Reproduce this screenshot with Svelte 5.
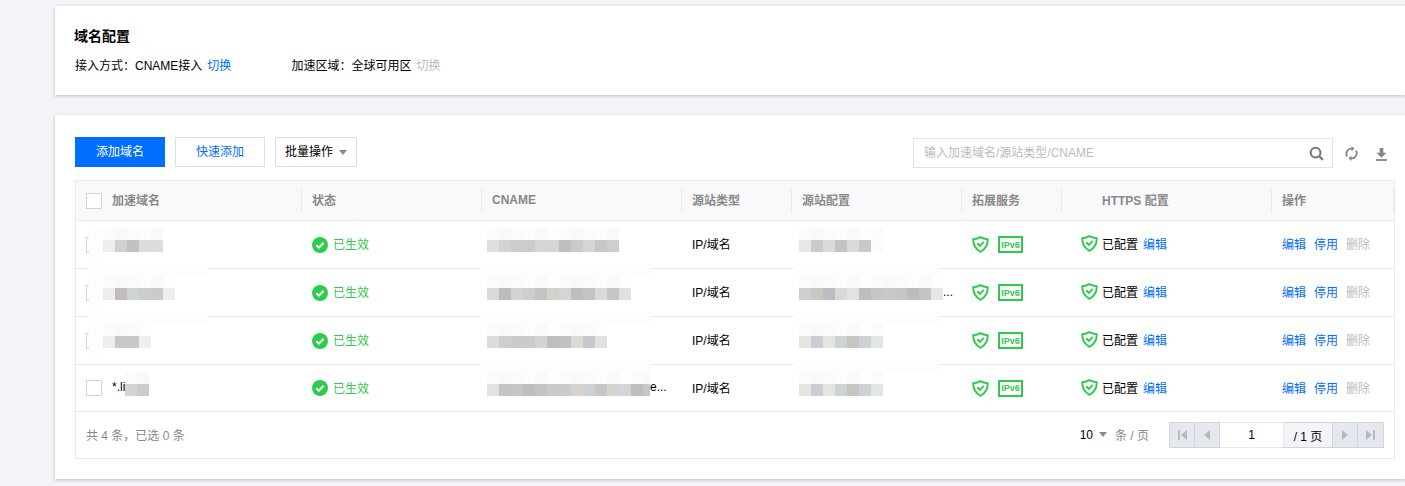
<script lang="ts">
  const faint = ["#fbfbfb", "#f8f8f8", "#fbfbfb", "#fdfdfd", "#f9f9f9", "#fdfdfd"];

  const rows = [
    {
      name: ["#eeeeec", "#d0d0d0", "#c4c2c0", "#dcdcdc", "#dcdddf"],
      cname: ["#dfdfdd", "#d3d3d3", "#cccccc", "#cbcbc9", "#d6d5d1", "#d2d6da", "#c2bebb", "#c9cbca", "#d3d5da", "#c9c7c8", "#cdcfcd"],
      origin: ["#e6e7e9", "#cdcbc9", "#d9dadc", "#c4c4c2", "#dadada", "#c9c9c9", "#fafbfd"],
    },
    {
      name: ["#ecedec", "#c2bcbc", "#d0d3d6", "#cdcdcd", "#cccbcb", "#eeeeee"],
      cname: ["#dad9d7", "#bcbcbc", "#d4d3d1", "#ccced3", "#c4c4c4", "#d4d1cc", "#d3d5d9", "#bebebe", "#c4c2c2", "#d8dadc", "#c6c6c6", "#e0e0e0"],
      origin: ["#cfcfcf", "#c9c7c4", "#bcbdc0", "#d8d8d8", "#e2e2e2", "#bfbdba", "#c6c6c3", "#c7c8c8", "#c4c6c8", "#bcbcbc", "#c4c4c6", "#e6e6e8"],
      originMore: true,
    },
    {
      name: ["#eeeeec", "#c8c8c8", "#cac8c6", "#eff0ee"],
      cname: ["#dfdbd8", "#cecece", "#c6cbce", "#cdcbc7", "#d3d3d0", "#bebebe", "#c0c2c0", "#dadad6", "#c6c8cc", "#e0e2e0"],
      origin: ["#e8e5e0", "#cccdd2", "#e4e4e0", "#d0d3d6", "#c8c4c0", "#ccd2d6", "#e4e4e4"],
    },
    {
      prefix: "*.li",
      name: ["#d4d4d4", "#c8ccd0"],
      cname: ["#e2e2e0", "#c4c4c4", "#c8c6c2", "#bcbfc2", "#c4c4c4", "#cbcaca", "#cccbc9", "#d5d3d0", "#ccd2d4", "#c6c6c6", "#d6d2ce", "#d3d5d8", "#bebebc", "#c8c8c8"],
      cnameMore: true,
      origin: ["#e8e5e0", "#cccdd2", "#e4e4e0", "#d0d3d6", "#c8c4c0", "#ccd2d6", "#e4e4e4"],
    },
  ];
</script>

{#snippet mosaic(cells: string[])}
  <span class="mosaic">
    <span class="mosaic-row">
      {#each cells as _, i}
        <i style="background:{faint[i % faint.length]}"></i>
      {/each}
    </span>
    <span class="mosaic-row">
      {#each cells as c}
        <i style="background:{c}"></i>
      {/each}
    </span>
  </span>
{/snippet}

{#snippet shield()}
  <svg class="shield" width="17" height="17" viewBox="0 0 17 17" fill="none" stroke="#2fcb4f">
    <path d="M8.5 1.2C6.4 2.6 4 3.1 1.2 3.2c0 5.6 2.2 9.800 7.300 12.600 5.100-2.800 7.300-7 7.300-12.600C13 3.100 10.600 2.600 8.500 1.200z" stroke-width="2" stroke-linejoin="round" />
    <path d="M5.200 7.300l2.600 2.600 4-4" stroke-width="2" />
  </svg>
{/snippet}

<div class="page">
  <section class="card config">
    <h2>域名配置</h2>
    <div class="meta">
      <div class="meta-item">接入方式：<span class="strong">CNAME接入</span><a href="#top" class="link">切换</a></div>
      <div class="meta-item">加速区域：<span class="strong">全球可用区</span><span class="off">切换</span></div>
    </div>
  </section>

  <section class="card list">
    <div class="toolbar">
      <button class="btn primary"><span>添加域名</span></button>
      <button class="btn ghost"><span>快速添加</span></button>
      <button class="btn batch"><span>批量操作</span><span class="caret"></span></button>
      <div class="tools">
        <div class="search">
          <span class="placeholder">输入加速域名/源站类型/CNAME</span>
          <svg width="15" height="15" viewBox="0 0 16 16" fill="none" stroke="#777">
            <circle cx="7" cy="7" r="5.200" stroke-width="2.200" />
            <path d="M11 11l3.800 3.800" stroke-width="2.400" />
          </svg>
        </div>
        <svg class="tool" width="13" height="15" viewBox="0 0 14 16" fill="none" stroke="#888" stroke-width="2">
          <path d="M2.200 11.200A5.600 5.600 0 0 1 7.500 2.800" />
          <path d="M11.800 4.800A5.600 5.600 0 0 1 6.500 13.200" />
          <path d="M7 0l3.400 2.800L7 5.600z" fill="#888" stroke="none" />
          <path d="M7 10.400l-3.400 2.800L7 16z" fill="#888" stroke="none" />
        </svg>
        <svg class="tool last" width="11" height="13" viewBox="0 0 12 14" fill="#888">
          <path d="M4 0h4v5h3.500L6 10.500.5 5H4z" />
          <rect x="0" y="12" width="12" height="2" />
        </svg>
      </div>
    </div>

    <div class="table">
      <div class="row head">
        <div class="cell first"><div class="label"><span class="check"></span><span class="title">加速域名</span></div></div>
        <div class="cell"><div class="label"><span class="title">状态</span></div></div>
        <div class="cell"><div class="label"><span class="title">CNAME</span></div></div>
        <div class="cell"><div class="label"><span class="title">源站类型</span></div></div>
        <div class="cell"><div class="label"><span class="title">源站配置</span></div></div>
        <div class="cell"><div class="label"><span class="title">拓展服务</span></div></div>
        <div class="cell"><div class="label https"><span class="title">HTTPS 配置</span></div></div>
        <div class="cell"><div class="label"><span class="title">操作</span></div></div>
      </div>

      {#each rows as r, i}
        <div class="row body" class:short={i === 3}>
          <div class="cell first">
            <span class="check"></span>
            {#if r.prefix}<span class="domain">{r.prefix}</span>{/if}
            {@render mosaic(r.name)}
            {#if i < 3}
              <span class="patch side"></span>
              {#if i < 2}<span class="patch gap name"></span>{/if}
            {/if}
          </div>
          <div class="cell status">
            <svg width="16" height="16" viewBox="0 0 16 16">
              <circle cx="8" cy="8" r="8" fill="#2fcb4f" />
              <path d="M4.300 8.200l2.600 2.500 4.700-4.900" fill="none" stroke="#fff" stroke-width="2" />
            </svg>
            已生效
          </div>
          <div class="cell cname">
            {@render mosaic(r.cname)}
            {#if r.cnameMore}<span class="more">e...</span>{/if}
            {#if i < 3}<span class="patch gap cname-gap"></span>{/if}
          </div>
          <div class="cell">IP/域名</div>
          <div class="cell origin">
            {@render mosaic(r.origin)}
            {#if r.originMore}<span class="more">...</span>{/if}
            {#if i < 3}<span class="patch gap origin-gap"></span>{/if}
          </div>
          <div class="cell service">
            {@render shield()}
            <span class="ipv6">IPv6</span>
          </div>
          <div class="cell https-cell">
            {@render shield()}
            <span class="done">已配置</span>
            <a href="#top" class="link">编辑</a>
          </div>
          <div class="cell ops">
            <a href="#top" class="link">编辑</a>
            <a href="#top" class="link">停用</a>
            <span class="off">删除</span>
          </div>
        </div>
      {/each}

      <div class="foot">
        <span class="count">共 4 条，已选 0 条</span>
        <div class="page-size">
          <span class="size">10</span><span class="caret"></span><span class="unit">条 / 页</span>
        </div>
        <div class="pager">
          <span class="pg">
            <svg width="9" height="10" viewBox="0 0 9 10" fill="#b4b9c2"><rect width="2" height="10" /><path d="M9 0v10L3 5z" /></svg>
          </span>
          <span class="pg">
            <svg width="6" height="10" viewBox="0 0 6 10" fill="#b4b9c2"><path d="M6 0v10L0 5z" /></svg>
          </span>
          <span class="pg-input">1</span>
          <span class="pg-total">/ 1 页</span>
          <span class="pg">
            <svg width="6" height="10" viewBox="0 0 6 10" fill="#b4b9c2"><path d="M0 0v10l6-5z" /></svg>
          </span>
          <span class="pg">
            <svg width="9" height="10" viewBox="0 0 9 10" fill="#b4b9c2"><path d="M0 0v10l6-5z" /><rect x="7" width="2" height="10" /></svg>
          </span>
        </div>
      </div>
    </div>
  </section>
</div>

<style>
  :global(body) {
    background: #f2f4f8;
    font-family: "Liberation Sans", "Noto Sans CJK SC", sans-serif;
    font-size: 12px;
    color: #000;
  }

  .page {
    height: 486px;
    overflow: hidden;
    padding: 6px 0 0 55px;
    box-sizing: border-box;
  }

  .card {
    background: #fff;
    box-shadow: 0 1px 3px rgba(54, 58, 80, 0.3);
    box-sizing: border-box;
  }

  .config {
    height: 89px;
    padding: 21px 20px 0;
  }

  h2 {
    margin: 0 0 0 -1px;
    font-size: 14px;
    line-height: 18px;
    font-weight: 700;
    color: #000;
  }

  .meta {
    display: flex;
    gap: 60px;
    margin-top: 12px;
    line-height: 18px;
  }

  .meta-item {
    color: #000;
    display: flex;
  }

  .strong {
    margin-right: 5px;
  }

  a {
    text-decoration: none;
  }

  .link {
    color: #006eff;
  }

  .off {
    color: #bbb;
  }

  .list {
    margin-top: 20px;
    height: 364px;
    padding: 22px 10px 0 20px;
  }

  .toolbar {
    display: flex;
    gap: 10px;
    height: 30px;
    margin-bottom: 13px;
  }

  .btn {
    height: 30px;
    box-sizing: border-box;
    border: 1px solid #dcdfe6;
    background: #fff;
    font: inherit;
    padding: 0 0 3px;
    display: flex;
    align-items: center;
    justify-content: center;
  }

  .primary {
    width: 90px;
    background: #006eff;
    border-color: #006eff;
    color: #fff;
  }

  .ghost {
    width: 90px;
    color: #006eff;
  }

  .batch {
    width: 82px;
    color: #000;
  }

  .caret {
    display: inline-block;
    width: 0;
    height: 0;
    border-left: 4px solid transparent;
    border-right: 4px solid transparent;
    border-top: 5px solid #888;
    margin-left: 6px;
  }

  .batch .caret {
    margin-top: 3px;
  }

  .tools {
    margin-left: auto;
    display: flex;
    align-items: center;
    height: 30px;
    margin-top: 1px;
    margin-right: 8px;
  }

  .search {
    width: 420px;
    height: 30px;
    box-sizing: border-box;
    border: 1px solid #dfe3ea;
    display: flex;
    align-items: center;
    justify-content: space-between;
    padding: 0 8px 0 10px;
  }

  .placeholder {
    color: #bbb;
    margin-bottom: 3px;
  }

  .tool {
    margin-left: 12px;
  }

  .tool.last {
    margin-left: 18px;
    margin-top: 2px;
  }

  .table {
    width: 1320px;
    height: 279px;
    box-sizing: border-box;
    border: 1px solid #e7eaef;
  }

  .row {
    display: grid;
    grid-template-columns: 226px 180px 200px 110px 170px 100px 210px 122px;
    border-bottom: 1px solid #e7eaef;
    box-sizing: border-box;
  }

  .head {
    height: 40px;
    background: #f9f9fb;
    color: #888;
    font-weight: 700;
  }

  .head .cell {
    padding: 0;
  }

  .label {
    width: 100%;
    height: 23px;
    box-sizing: border-box;
    padding-left: 10px;
    border-right: 1px solid #e7eaef;
    display: flex;
    align-items: center;
  }

  .title {
    margin-bottom: 2px;
  }

  .head .check {
    margin-right: 10px;
  }

  .https {
    padding-left: 40px;
  }

  .body {
    height: 48px;
  }

  .body.short {
    height: 47px;
  }

  .cell {
    display: flex;
    align-items: center;
    padding-left: 10px;
    position: relative;
    min-width: 0;
  }

  /* CJK text sits a pixel low, icons get it back with a top margin */
  .body .cell {
    padding-bottom: 2px;
  }

  .body svg,
  .body .check,
  .body .ipv6 {
    margin-top: 2px;
  }

  .check {
    width: 16px;
    height: 16px;
    box-sizing: border-box;
    border: 1px solid #cfd5de;
    background: #fff;
    flex: none;
  }

  .body .first .check {
    margin-right: 10px;
  }

  .domain {
    color: #000;
  }

  .mosaic {
    display: inline-flex;
    flex-direction: column;
    flex: none;
    margin-bottom: 7px;
    position: relative;
  }

  .first .mosaic {
    margin-left: -9px;
  }

  .first .domain + .mosaic {
    margin-left: 0;
  }

  .cname .mosaic {
    margin-left: -5px;
    max-width: 163px;
    overflow: hidden;
  }

  .origin .mosaic {
    margin-left: -3px;
  }

  .mosaic-row {
    display: flex;
  }

  .mosaic-row i {
    display: block;
    flex: none;
    width: 12px;
    height: 12px;
  }

  /* white smudges left over from the redaction */
  .patch {
    position: absolute;
    background: #fdfdfd;
  }

  .patch.side {
    left: 13px;
    top: 9px;
    width: 14px;
    height: 33px;
  }

  .patch.gap {
    top: 43px;
    height: 12px;
    z-index: 1;
  }

  .patch.name {
    left: 13px;
    width: 118px;
  }

  .patch.cname-gap {
    left: -2px;
    width: 170px;
  }

  .patch.origin-gap {
    left: 2px;
    width: 144px;
  }

  .more {
    color: #000;
    flex: none;
  }

  .status {
    color: #2fcb4f;
    gap: 5px;
  }

  .service .shield {
    margin-right: 9px;
  }

  .ipv6 {
    width: 25px;
    height: 17px;
    box-sizing: border-box;
    border: 2px solid #2fcb4f;
    color: #2fcb4f;
    font-size: 9px;
    font-weight: 700;
    display: flex;
    align-items: center;
    justify-content: center;
  }

  .https-cell {
    padding-left: 19px;
  }

  .https-cell .shield {
    margin-top: 0;
    margin-right: 4px;
  }

  .done {
    margin-right: 5px;
  }

  .ops {
    gap: 8px;
  }

  .foot {
    height: 46px;
    display: flex;
    align-items: center;
    padding: 0 10px 1px 10px;
    box-sizing: border-box;
    color: #888;
  }

  .count {
    margin-right: auto;
  }

  .page-size {
    display: flex;
    align-items: center;
    margin-right: 20px;
  }

  .size {
    color: #000;
  }

  .page-size .caret {
    margin-left: 6px;
  }

  .unit {
    margin-left: 8px;
  }

  .pager {
    display: flex;
    height: 26px;
    margin-top: 1px;
    box-sizing: border-box;
    border: 1px solid #cfd5de;
    color: #000;
  }

  .pg {
    width: 25px;
    box-sizing: border-box;
    background: #e5e8ed;
    border-right: 1px solid #cfd5de;
    display: flex;
    align-items: center;
    justify-content: center;
  }

  .pg:last-child {
    border-right: none;
  }

  .pg-input {
    width: 63px;
    background: #fff;
    display: flex;
    align-items: center;
    justify-content: center;
    margin: -1px 0;
    border-top: 1px solid #e5e8ed;
    border-bottom: 1px solid #e5e8ed;
  }

  .pg-total {
    width: 50px;
    box-sizing: border-box;
    background: #f2f4f8;
    border-right: 1px solid #cfd5de;
    border-left: 1px solid #e5e8ed;
    display: flex;
    align-items: center;
    justify-content: center;
  }
</style>
